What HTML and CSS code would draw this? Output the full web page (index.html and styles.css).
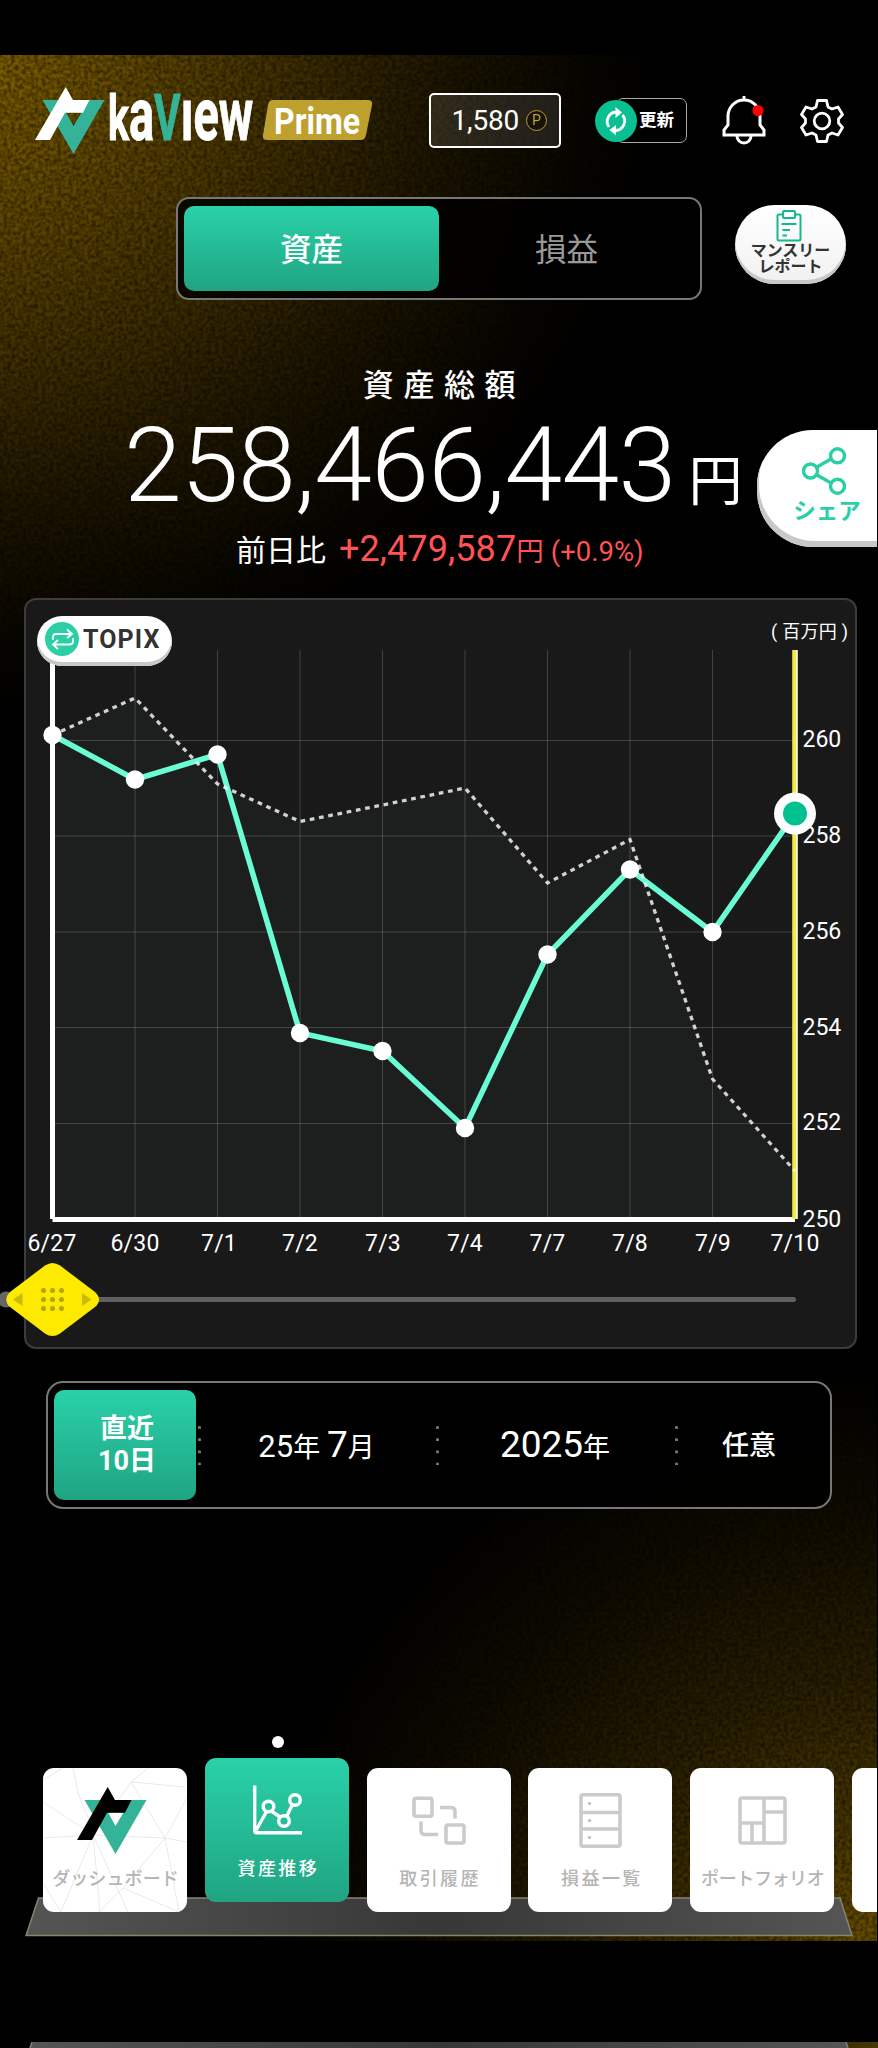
FILE: index.html
```html
<!DOCTYPE html>
<html lang="ja">
<head>
    <meta charset="UTF-8">
    <meta name="viewport" content="width=device-width, initial-scale=1.0">
    <title>kaView Prime - 資産推移</title>
    <link rel="stylesheet" href="styles.css">
</head>
<body>
    <div class="screen">
        <svg class="grain" width="877" height="1886" aria-hidden="true">
            <filter id="leather" x="0" y="0" width="100%" height="100%">
                <feTurbulence type="fractalNoise" baseFrequency="0.26" numOctaves="2" seed="4"/>
                <feColorMatrix values="0 0 0 0 0  0 0 0 0 0  0 0 0 0 0  2 0 0 0 -0.6"/>
            </filter>
            <rect width="877" height="1886" filter="url(#leather)"/>
        </svg>

        <header class="header">
            <svg class="logo" width="337" height="67" viewBox="0 0 337 67">
                <path fill="#34b398" fill-rule="evenodd" d="M7.500 13H69.500L38.500 67ZM31 25.500L38.500 39L46.500 25.500Z"/>
                <path fill="#fff" d="M30.700 0L38 13H54.500L48 25.700H30L15 53H0Z"/>
                <text class="logo-text logo-name" transform="translate(73 53) scale(.625 1)" font-size="75"><tspan font-size="63">k</tspan>a<tspan font-size="65" class="logo-v">V</tspan>ıew</text>
                <path fill="#bda02e" d="M238 13H333Q338 13 337 18L331 48Q330 53 326 53H232Q227 53 228 48L233 18Q234 13 238 13Z"/>
                <text class="logo-text" x="239" y="46.500" font-size="37" textLength="86" lengthAdjust="spacingAndGlyphs">Prime</text>
            </svg>
            <div class="points">
                <span>1,580</span>
                <span class="points-mark">P</span>
            </div>
            <button class="update">
                <span class="update-icon">
                    <svg width="42" height="42" viewBox="0 0 42 42" fill="none" stroke="#fff" stroke-width="2.800">
                        <path d="M21 12A9.500 9.500 0 0 0 14 27M27.500 15A9.500 9.500 0 0 1 20.500 30.500"/>
                        <path fill="#fff" stroke="none" d="M20.500 7L27 12.500L20.500 18ZM21 25V35.500L14.500 30Z"/>
                    </svg>
                </span>
                <span class="update-label">更新</span>
            </button>
            <svg class="bell" width="44" height="49" viewBox="0 0 44 49" fill="none" stroke="#fff" stroke-width="3">
                <path d="M22 0V5M2 39V34L6 29V20A16 16 0 0 1 38 20V29L42 34V39Z"/>
                <path d="M15 40A7 7 0 0 0 29 40"/>
                <circle cx="36" cy="14.500" r="5.500" fill="#f00" stroke="none"/>
            </svg>
            <svg class="gear" width="44" height="44" viewBox="0 0 44 44" fill="none" stroke="#fff" stroke-width="2.800" stroke-linejoin="round">
                <path d="M17.500 1.500H26.500L28 8L32 10L38 8L42.500 15.500L38.500 20V24L42.500 28.500L38 36L32 34L28 36L26.500 42.500H17.500L16 36L12 34L6 36L1.500 28.500L5.500 24V20L1.500 15.500L6 8L12 10L16 8Z"/>
                <circle cx="22" cy="22" r="7.800"/>
            </svg>
        </header>

        <div class="tab-row">
            <div class="tabs">
                <button class="tab active">資産</button>
                <button class="tab">損益</button>
            </div>
            <button class="report">
                <svg width="26" height="32" viewBox="0 0 26 32" fill="none" stroke="#14b88d" stroke-width="2">
                    <rect x="1.500" y="4.500" width="23" height="26" rx="1.500"/>
                    <rect x="7" y="1" width="12" height="7" rx="1" fill="#fff"/>
                    <path d="M5.500 14H20.500M6.500 20H14M6.500 25.500H11"/>
                </svg>
                <span>マンスリー<br>レポート</span>
            </button>
        </div>

        <main>
            <section class="summary">
                <h1 class="summary-title">資産総額</h1>
                <div class="amount">
                    <span class="amount-value">258,466,443</span>
                    <span class="amount-unit">円</span>
                </div>
                <div class="change">
                    <span class="change-label">前日比</span>
                    <span class="change-value">+2,479,587</span>
                    <span class="change-unit">円</span>
                    <span class="change-rate">(+0.9%)</span>
                </div>
                <button class="share">
                    <svg width="44" height="48" viewBox="0 0 44 48" fill="none" stroke="#2bcfa5" stroke-width="3.400">
                        <path d="M15 20L29 12M15 28L29 36"/>
                        <circle cx="8.500" cy="24" r="7"/>
                        <circle cx="35.500" cy="8.800" r="7"/>
                        <circle cx="35.500" cy="39.200" r="7"/>
                    </svg>
                    <span>シェア</span>
                </button>
            </section>

            <section class="chart-card">
                <button class="topix">
                    <span class="topix-icon">
                        <svg width="34" height="34" viewBox="0 0 34 34" fill="none" stroke="#fff" stroke-width="1.800">
                            <path d="M8 18V15Q8 12 11 12H26M22 7.500L27 12L22 16M28 16V19Q28 22.500 25 22.500H9M13 18L8 22.500L13 27"/>
                        </svg>
                    </span>
                    TOPIX
                </button>
                <svg class="chart" width="829" height="747" viewBox="0 0 829 747">
                    <polygon fill="#1c1f1e" points="26.500,135 109,98 191.500,184 274,221.500 356.500,205 439,188 521.500,283 604,239.500 686.500,479 769,571 769,619 26.500,619"/>
                    <path class="grid" d="M109 50V619M191.500 50V619M274 50V619M356.500 50V619M439 50V619M521.500 50V619M604 50V619M686.500 50V619M26 140.500H769M26 236H769M26 332H769M26 427.500H769M26 523.500H769"/>
                    <path fill="none" stroke="#fff" stroke-width="5" d="M26.500 50V619"/>
                    <path fill="none" stroke="#fff" stroke-width="5" d="M26.500 619.500H769"/>
                    <path fill="none" stroke="#fff" stroke-width="5" d="M769.300 50V619"/>
                    <path fill="none" stroke="#f2ea45" stroke-width="4" d="M768.300 50V619"/>
                    <g class="axis">
                        <text x="776.500" y="147">260</text>
                        <text x="776.500" y="243">258</text>
                        <text x="776.500" y="339">256</text>
                        <text x="776.500" y="434.500">254</text>
                        <text x="776.500" y="530">252</text>
                        <text x="776.500" y="626.500">250</text>
                    </g>
                    <g class="axis dates">
                        <text x="26" y="651">6/27</text>
                        <text x="109" y="651">6/30</text>
                        <text x="193" y="651">7/1</text>
                        <text x="274" y="651">7/2</text>
                        <text x="357" y="651">7/3</text>
                        <text x="439" y="651">7/4</text>
                        <text x="521.500" y="651">7/7</text>
                        <text x="604" y="651">7/8</text>
                        <text x="687" y="651">7/9</text>
                        <text x="769" y="651">7/10</text>
                    </g>
                    <text class="unit" x="745" y="38" textLength="77">( 百万円 )</text>
                    <polyline fill="none" stroke="#69fcd5" stroke-width="5.500" points="26.500,135 109,179.500 191.500,154.500 274,433 356.500,451 439,528 521.500,354.500 604,269.500 686.500,332 769,213.500"/>
                    <polyline fill="none" stroke="#fff" stroke-opacity=".8" stroke-width="3.300" stroke-dasharray="4.700 4.700" points="26.500,135 109,98 191.500,184 274,221.500 356.500,205 439,188 521.500,283 604,239.500 686.500,479 769,571"/>
                    <g fill="#fff">
                        <circle cx="26.500" cy="135" r="9.200"/>
                        <circle cx="109" cy="179.500" r="9.200"/>
                        <circle cx="191.500" cy="154.500" r="9.200"/>
                        <circle cx="274" cy="433" r="9.200"/>
                        <circle cx="356.500" cy="451" r="9.200"/>
                        <circle cx="439" cy="528" r="9.200"/>
                        <circle cx="521.500" cy="354.500" r="9.200"/>
                        <circle cx="604" cy="269.500" r="9.200"/>
                        <circle cx="686.500" cy="332" r="9.200"/>
                        <circle cx="769" cy="213.500" r="21"/>
                    </g>
                    <circle cx="769" cy="213.500" r="12" fill="#00c08f"/>

                    <!-- range slider -->
                    <circle cx="-20" cy="699.500" r="8" fill="#666"/>
                    <path stroke="#606060" stroke-width="5" stroke-linecap="round" d="M-20 699.500H767.500"/>
                    <path fill="#fee900" d="M19 665.500Q26.500 660.500 34 665.500L69 692Q77 699.500 69 707L34 733.500Q26.500 738.500 19 733.500L-16 707Q-23.500 699.500 -16 692Z"/>
                    <path fill="#cbbb08" d="M-13 699.500L-3.500 693V706ZM65.500 699.500L56 693V706Z"/>
                    <g fill="#b3a50c">
                        <circle cx="17.500" cy="690.500" r="2.500"/><circle cx="26.500" cy="690.500" r="2.500"/><circle cx="35.500" cy="690.500" r="2.500"/>
                        <circle cx="17.500" cy="699.500" r="2.500"/><circle cx="26.500" cy="699.500" r="2.500"/><circle cx="35.500" cy="699.500" r="2.500"/>
                        <circle cx="17.500" cy="708.500" r="2.500"/><circle cx="26.500" cy="708.500" r="2.500"/><circle cx="35.500" cy="708.500" r="2.500"/>
                    </g>
                </svg>
            </section>

            <div class="periods">
                <button class="period recent active">直近<br>10日</button>
                <span class="dots"></span>
                <button class="period month"><span>25</span>年 <span class="big">7</span>月</button>
                <span class="dots"></span>
                <button class="period year"><span class="big">2025</span>年</button>
                <span class="dots"></span>
                <button class="period custom">任意</button>
            </div>
        </main>

        <nav class="nav">
            <svg class="shelf" width="828" height="40" viewBox="0 0 828 40">
                <defs>
                    <linearGradient id="shelf">
                        <stop offset="0" stop-color="#555"/>
                        <stop offset=".5" stop-color="#373737"/>
                        <stop offset="1" stop-color="#555"/>
                    </linearGradient>
                </defs>
                <path fill="url(#shelf)" stroke="#87836f" stroke-width="1.500" d="M13.500 1H815L827 38.500H1Z"/>
            </svg>
            <a class="nav-item">
                <svg class="web" width="144" height="144" viewBox="0 0 144 144" fill="none" stroke="#e9e9e9">
                    <path d="M30 0L35 25L50 62M0 34L50 67L0 70M0 12L20 0M50 67L88 14L105 0M88 14L142 19M88 14L122 70L144 74M144 30L122 70L50 67M122 70L136 144M122 70L80 120L56 144M50 67L57 144M50 67L85 144M0 115L18 144L50 67M80 120L136 144"/>
                </svg>
                <svg class="nav-icon nav-logo" width="70" height="67" viewBox="0 0 70 67">
                    <path fill="#34b398" fill-rule="evenodd" d="M7.500 13H69.500L38.500 67ZM31 25.500L38.500 39L46.500 25.500Z"/>
                    <path fill="#000" d="M30.700 0L38 13H54.500L48 25.700H30L15 53H0Z"/>
                </svg>
                <span class="nav-label kana">ダッシュボード</span>
            </a>
            <a class="nav-item active">
                <svg class="nav-icon" width="50" height="50" viewBox="0 0 50 50" fill="none" stroke="#fff" stroke-width="3.400">
                    <path d="M2.700 0V45Q2.700 47.300 5 47.300H50M4 45L14 27M20 26L28 31.500M35 30L40 20"/>
                    <circle cx="16.500" cy="21" r="5.300"/>
                    <circle cx="32" cy="35.500" r="5.300"/>
                    <circle cx="43" cy="14.500" r="5.300"/>
                </svg>
                <span class="nav-label">資産推移</span>
            </a>
            <a class="nav-item">
                <svg class="nav-icon" width="54" height="50" viewBox="0 0 54 50" fill="none" stroke="#cbcbcb" stroke-width="3.600">
                    <rect x="2" y="2.800" width="18" height="18" rx="2"/>
                    <rect x="34" y="29.500" width="18" height="18" rx="2"/>
                    <path d="M9 26V35Q9 39 13 39H26M28 12H39Q43 12 43 16V23"/>
                </svg>
                <span class="nav-label">取引履歴</span>
            </a>
            <a class="nav-item">
                <svg class="nav-icon" width="43" height="56" viewBox="0 0 43 56" fill="none" stroke="#cbcbcb" stroke-width="3.600">
                    <rect x="2" y="2.300" width="39" height="51.500" rx="2"/>
                    <path d="M2 20H41M2 36.500H41"/>
                    <g fill="#bbb" stroke="none"><circle cx="10.500" cy="11" r="1.600"/><circle cx="10.500" cy="28" r="1.600"/><circle cx="10.500" cy="45" r="1.600"/></g>
                </svg>
                <span class="nav-label">損益一覧</span>
            </a>
            <a class="nav-item">
                <svg class="nav-icon" width="49" height="49" viewBox="0 0 49 49" fill="none" stroke="#cbcbcb" stroke-width="3.600">
                    <rect x="2" y="2" width="45" height="45" rx="2"/>
                    <path d="M26 2V47M26 16H47M2 27H26M14 27V47"/>
                </svg>
                <span class="nav-label kana portfolio">ポートフォリオ</span>
            </a>
            <a class="nav-item"></a>
        </nav>
    </div>

    <div class="next-screen">
        <svg width="878" height="6" viewBox="0 0 878 6">
            <path fill="url(#shelf)" d="M32 0H846L848 6H30Z"/>
            <path fill="none" stroke="#87836f" stroke-width="1.500" d="M32 0L30 6M846 0L848 6"/>
        </svg>
    </div>
</body>
</html>
```

FILE: styles.css
```css
* {
    box-sizing: border-box;
}
body {
    margin: 0;
    padding-top: 55px;
    height: 2048px;
    background: #000;
    color: #fff;
    font-family: Roboto, "Noto Sans CJK JP", sans-serif;
    overflow: hidden;
}
button {
    border: 0;
    padding: 0;
    background: none;
    color: inherit;
    font-family: inherit;
}
svg {
    display: block;
    flex-shrink: 0;
}

.screen {
    position: relative;
    width: 877px;
    height: 1886px;
    overflow: hidden;
    background:
        radial-gradient(ellipse 720px 680px at -50px -10px, #866400 0%, #6a4f00 20%, #443200 45%, #1d1500 70%, #080600 88%, transparent 100%),
        radial-gradient(ellipse 660px 620px at 900px 1920px, #7a5c00 0%, #523d00 20%, #2b2000 48%, #100c00 75%, transparent 100%),
        #000;
}
.grain {
    position: absolute;
    top: 0;
    left: 0;
    opacity: .5;
}

/* header */
.header {
    position: relative;
    display: flex;
    align-items: center;
    height: 67px;
    margin-top: 32px;
    padding-left: 35px;
}
.logo {
    overflow: visible;
}
.logo-text {
    font-family: Roboto, sans-serif;
    font-weight: 700;
    fill: #fff;
}
.logo-name {
    stroke: #fff;
    stroke-width: 1px;
}
.logo-v {
    fill: #34b398;
    stroke: #34b398;
}
.points {
    display: flex;
    align-items: center;
    justify-content: flex-end;
    gap: 7px;
    width: 132px;
    height: 55px;
    margin-left: 57px;
    padding-right: 12px;
    border: 2px solid #fff;
    border-radius: 5px;
    background: rgba(255, 255, 255, .1);
    font-size: 28px;
    letter-spacing: -.2px;
}
.points-mark {
    width: 21px;
    height: 21px;
    border: 1.5px solid #bda02e;
    border-radius: 50%;
    background: #15120a;
    color: #bda02e;
    font-size: 14px;
    line-height: 19px;
    text-align: center;
    letter-spacing: 0;
}
.update {
    display: flex;
    align-items: center;
    width: 92px;
    margin-left: 34px;
}
.update-icon {
    z-index: 1;
    width: 42px;
    height: 42px;
    border-radius: 50%;
    background: #0abf91;
}
.update-label {
    width: 71px;
    height: 45px;
    margin-left: -21px;
    padding-left: 22px;
    border: 1.5px solid #aaa;
    border-radius: 7px;
    font-size: 17.500px;
    font-weight: 700;
    line-height: 42px;
    text-align: left;
}
.bell {
    margin-left: 35px;
}
.gear {
    margin-left: 34px;
}

/* tabs */
.tab-row {
    position: relative;
    display: flex;
    margin-top: 43px;
    padding-left: 176px;
}
.tabs {
    display: flex;
    width: 526px;
    height: 103px;
    padding: 7px 6px;
    border: 2px solid #777;
    border-radius: 13px;
    background: rgba(0, 0, 0, .8);
}
.tab {
    width: 255px;
    padding-bottom: 3px;
    border-radius: 10px;
    font-size: 31.500px;
    color: #999;
}
.active {
    background: linear-gradient(#29d1a9, #20a482);
    color: #fff;
    font-weight: 500;
}
.report {
    display: flex;
    flex-direction: column;
    align-items: center;
    width: 111px;
    height: 79px;
    margin: 8px 0 0 33px;
    padding-top: 5px;
    border-radius: 40px;
    background: linear-gradient(#fff, #f1f1f1);
    box-shadow: inset 0 -4px #c8c8c8;
    color: #333;
    font-size: 16px;
    font-weight: 700;
    line-height: 16px;
}
.report svg {
    margin-right: 3px;
}
.report span {
    margin-top: 1px;
}

/* total */
.summary {
    position: relative;
    height: 298px;
    padding-top: 66px;
}
.summary-title {
    margin: 0;
    padding-left: 11px;
    font-size: 31px;
    font-weight: 500;
    line-height: 40px;
    letter-spacing: 9.600px;
    text-align: center;
}
.amount {
    display: flex;
    align-items: baseline;
    height: 110px;
    margin-top: 5px;
    padding-left: 124px;
    line-height: 110px;
}
.amount-value {
    font-size: 104px;
    font-weight: 300;
    letter-spacing: -.7px;
}
.amount-unit {
    margin-left: 13px;
    font-size: 54px;
}
.change {
    display: flex;
    align-items: baseline;
    margin-top: 8px;
    padding-left: 236px;
    line-height: 40px;
}
.change-label {
    font-size: 30px;
}
.change-value {
    margin-left: 13px;
    font-size: 36px;
    letter-spacing: .1px;
    color: #ff5252;
}
.change-unit,
.change-rate {
    font-size: 27.500px;
    color: #ff5252;
}
.change-rate {
    margin-left: 7px;
}
.share {
    position: absolute;
    top: 130px;
    right: 0;
    display: flex;
    flex-direction: column;
    align-items: center;
    width: 120px;
    height: 117px;
    padding: 17px 0 0 20px;
    border-radius: 56px 0 0 56px;
    background: #fff;
    box-shadow: inset 2px -6px #c8c8c8;
    color: #2bcfa5;
    font-size: 22.500px;
    font-weight: 700;
    line-height: 32px;
}
.share svg {
    margin-right: 6px;
}

/* chart */
.chart-card {
    position: relative;
    width: 833px;
    height: 751px;
    margin-left: 24px;
    border: 2px solid #3d3c3a;
    border-radius: 12px;
    background: #191919;
}
.chart {
    overflow: visible;
}
.grid {
    stroke: #fff;
    stroke-opacity: .18;
}
.axis {
    fill: #fff;
    font-size: 23px;
}
.dates {
    text-anchor: middle;
    letter-spacing: .2px;
}
.unit {
    fill: #fff;
    font-size: 18px;
}
.topix {
    position: absolute;
    top: 16px;
    left: 11px;
    display: flex;
    align-items: center;
    gap: 4px;
    width: 135px;
    height: 50px;
    padding: 0 0 4px 8px;
    border-radius: 25px;
    background: #fff;
    box-shadow: inset 0 -4px #c8c8c8;
    color: #333;
    font-size: 25px;
    font-weight: 700;
    letter-spacing: 1.100px;
}
.topix-icon {
    width: 34px;
    height: 34px;
    border-radius: 50%;
    background: #2bcfa5;
}

/* period selector */
.periods {
    position: relative;
    display: flex;
    align-items: center;
    width: 786px;
    height: 128px;
    margin: 32px 0 0 46px;
    padding: 0 6px;
    border: 2px solid #777;
    border-radius: 17px;
    background: rgba(0, 0, 0, .8);
}
.period {
    padding-top: 2px;
    font-size: 27px;
    line-height: 44px;
}
.period span {
    font-size: 31px;
}
.period .big {
    font-size: 37px;
}
.recent {
    width: 142px;
    height: 110px;
    padding: 0 0 0 4px;
    border-radius: 10px;
    line-height: 32px;
    font-weight: 700;
}
.month {
    width: 235px;
}
.year {
    width: 236px;
}
.custom {
    width: 146px;
    font-weight: 500;
}
.dots {
    width: 3px;
    height: 39px;
    margin-left: 2px;
    margin-right: -2px;
    background: radial-gradient(circle at 50% 1.500px, #777 1.300px, transparent 1.700px) 0 0 / 3px 12.200px;
}

/* bottom navigation */
.nav {
    position: relative;
    display: flex;
    gap: 17.800px;
    margin-top: 249px;
    padding: 10px 0 29px 43px;
    height: 183px;
}
.shelf {
    position: absolute;
    left: 25px;
    bottom: 4px;
}
.nav-item {
    position: relative;
    display: flex;
    flex-direction: column;
    align-items: center;
    flex: 0 0 144px;
    height: 144px;
    border-radius: 11px;
    background: #fff;
    color: #b5b5b5;
}
.nav-item.active {
    margin-top: -10px;
    background: linear-gradient(#29d1a9, #20a482);
    color: #fff;
}
/* marker above the current page */
.nav-item.active::before {
    content: "";
    position: absolute;
    top: -22px;
    left: 67px;
    width: 12px;
    height: 12px;
    border-radius: 50%;
    background: #fff;
}
.nav-icon {
    position: relative;
    height: 67px;
    margin-top: 19px;
}
.nav-logo {
    margin-right: 6px;
}
.web {
    position: absolute;
    top: 0;
    left: 0;
}
.nav-label {
    position: relative;
    margin-top: 13px;
    padding-left: 3px;
    font-size: 18px;
    font-weight: 500;
    line-height: 24px;
    letter-spacing: 2.400px;
    white-space: nowrap;
}
.nav-label.kana {
    padding-left: 1px;
    letter-spacing: .1px;
}
.nav-label.portfolio {
    letter-spacing: -.4px;
}

/* top edge of the following screen */
.next-screen {
    margin-top: 101px;
    height: 6px;
    background: linear-gradient(90deg, #000 80%, #4a3700);
}
```
